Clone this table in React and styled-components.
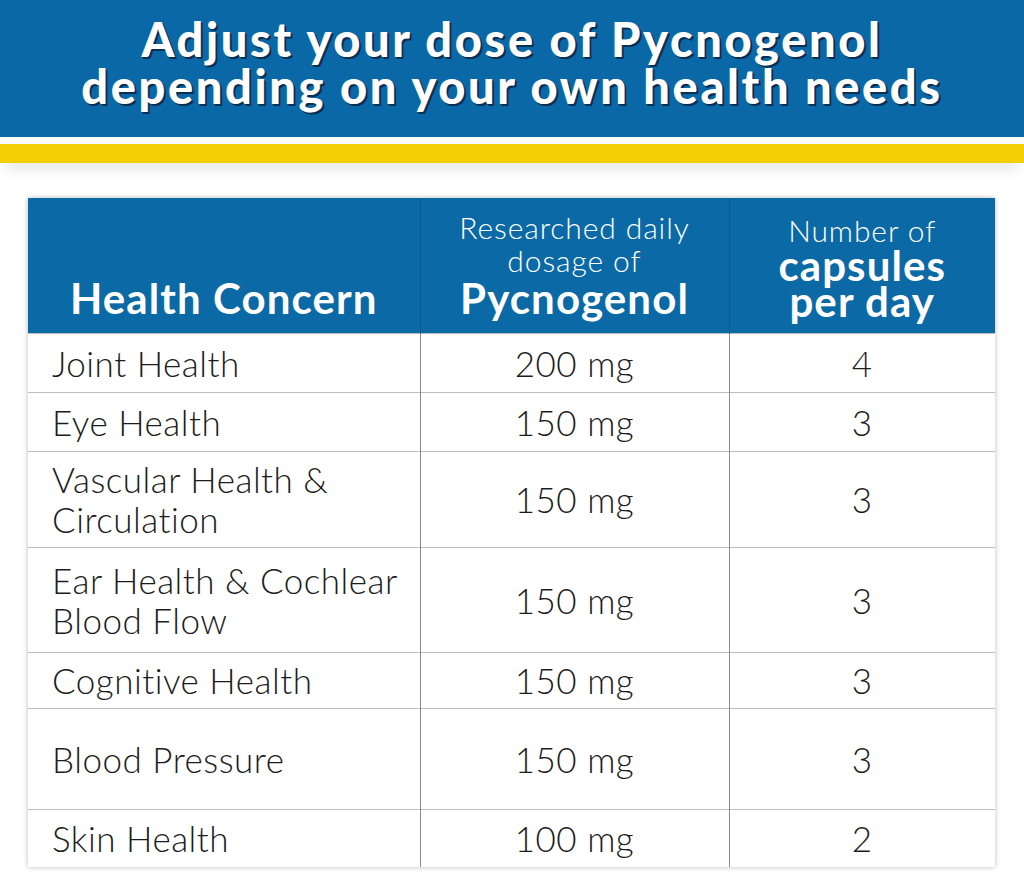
import React from 'react';
import styled, { createGlobalStyle } from 'styled-components';

const GlobalStyle = createGlobalStyle`
  html, body {
    margin: 0;
    padding: 0;
    background: #ffffff;
  }
  body {
    font-family: Lato, "Open Sans", sans-serif;
  }
`;

const Page = styled.div`
  width: 1024px;
  height: 896px;
  overflow: hidden;
  background: #fff;
`;

const Banner = styled.header`
  height: 137px;
  background: #0b68a6;
  display: flex;
  align-items: center;
  justify-content: center;
  padding-bottom: 12px;
  box-sizing: border-box;
`;

const Title = styled.h1`
  margin: 0;
  color: #fff;
  font-family: Lato, sans-serif;
  font-weight: 900;
  font-size: 47px;
  line-height: 47px;
  text-align: center;
  letter-spacing: 2.6px;
  text-shadow: 2px 2px 0 #0a2f52, 1px 1px 0 #0a2f52;
`;

const Stripe = styled.div`
  margin-top: 7px;
  height: 19px;
  background: #f4cf05;
  box-shadow: 0 10px 14px -6px rgba(0, 0, 0, 0.18);
`;

const TableWrap = styled.div`
  margin: 35px 0 0 28px;
  width: 967px;
  box-shadow: 0 0 5px rgba(0, 0, 0, 0.28);
`;

const Table = styled.table`
  width: 100%;
  border-collapse: collapse;
  table-layout: fixed;
`;

const HeadCell = styled.th`
  background: #0b69a6;
  color: #fff;
  height: 135px;
  padding: 0 6px 14px;
  box-sizing: border-box;
  vertical-align: bottom;
  text-align: center;
  border-left: 1px solid #0a5a90;
  font-weight: 700;
  &:first-child {
    border-left: none;
  }
`;

const Light = styled.div`
  font-weight: 300;
  font-size: 30px;
  line-height: 33px;
  letter-spacing: 0.9px;
`;

const Bold = styled.div`
  font-weight: 700;
  font-size: 42px;
  line-height: ${p => p.$tight ? '36px' : '42px'};
  letter-spacing: 1.1px;
`;

const Row = styled.tr`
  height: ${p => p.$h}px;
  border-top: 1px solid #bdbdbd;
`;

const Cell = styled.td`
  padding: 0 ${p => p.$left ? '6px' : '0'} 0 ${p => p.$left ? '24px' : '0'};
  text-align: ${p => p.$left ? 'left' : 'center'};
  vertical-align: middle;
  border-left: 1px solid #8a8a8a;
  color: #1c1c1c;
  font-weight: 300;
  font-size: 35px;
  line-height: 40px;
  letter-spacing: 0.5px;
  white-space: nowrap;
  &:first-child {
    border-left: none;
  }
`;

const rows = [
  { name: 'Joint Health', dose: '200 mg', caps: 4, h: 59 },
  { name: 'Eye Health', dose: '150 mg', caps: 3, h: 59 },
  { name: ['Vascular Health &', 'Circulation'], dose: '150 mg', caps: 3, h: 96 },
  { name: ['Ear Health & Cochlear', 'Blood Flow'], dose: '150 mg', caps: 3, h: 105 },
  { name: 'Cognitive Health', dose: '150 mg', caps: 3, h: 56 },
  { name: 'Blood Pressure', dose: '150 mg', caps: 3, h: 101 },
  { name: 'Skin Health', dose: '100 mg', caps: 2, h: 58 },
];

export default function App() {
  return (
    <Page>
      <GlobalStyle />
      <Banner>
        <Title>
          Adjust your dose of Pycnogenol
          <br />
          depending on your own health needs
        </Title>
      </Banner>
      <Stripe />
      <TableWrap>
        <Table>
          <colgroup>
            <col style={{ width: 392 }} />
            <col style={{ width: 309 }} />
            <col style={{ width: 266 }} />
          </colgroup>
          <thead>
            <tr>
              <HeadCell>
                <Bold>Health Concern</Bold>
              </HeadCell>
              <HeadCell>
                <Light>Researched daily</Light>
                <Light>dosage of</Light>
                <Bold>Pycnogenol</Bold>
              </HeadCell>
              <HeadCell>
                <Light>Number of</Light>
                <Bold $tight>capsules</Bold>
                <Bold $tight>per day</Bold>
              </HeadCell>
            </tr>
          </thead>
          <tbody>
            {rows.map((r, i) => (
              <Row key={i} $h={r.h}>
                <Cell $left>
                  {Array.isArray(r.name)
                    ? r.name.map((line, j) => <div key={j}>{line}</div>)
                    : r.name}
                </Cell>
                <Cell>{r.dose}</Cell>
                <Cell>{r.caps}</Cell>
              </Row>
            ))}
          </tbody>
        </Table>
      </TableWrap>
    </Page>
  );
}
